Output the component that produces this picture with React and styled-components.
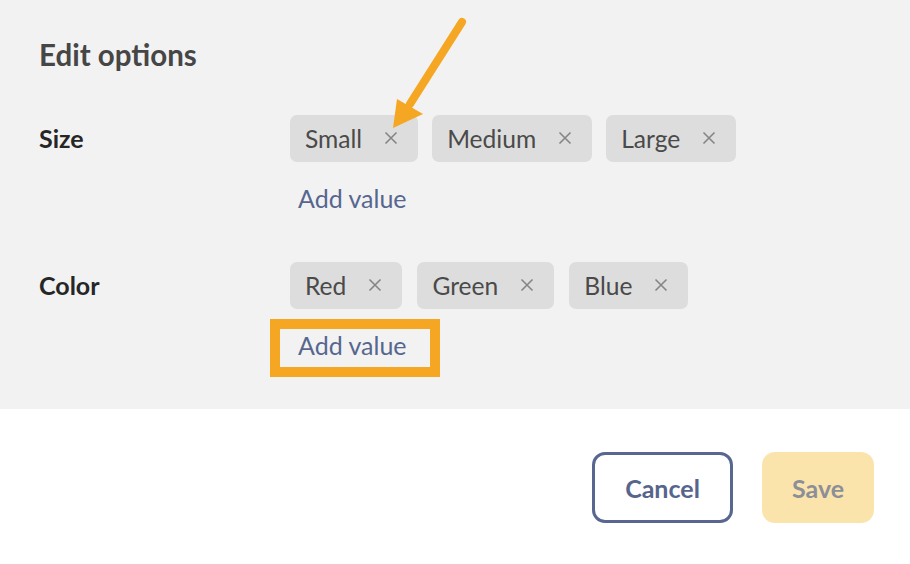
import React from "react";
import styled, { createGlobalStyle } from "styled-components";

const GlobalStyle = createGlobalStyle`
  html, body {
    margin: 0;
    padding: 0;
    background: #ffffff;
    font-family: Lato, "Open Sans", "Liberation Sans", sans-serif;
  }
`;

const Page = styled.div`
  width: 910px;
  height: 564px;
  display: flex;
  flex-direction: column;
  background: #ffffff;
`;

const Panel = styled.section`
  position: relative;
  height: 409px;
  box-sizing: border-box;
  padding: 37px 39px 0;
  background: #f2f2f2;
`;

const Title = styled.h2`
  margin: 0 0 42px;
  font-size: 29.5px;
  line-height: 36px;
  font-weight: 700;
  color: #464646;
`;

const OptionRow = styled.div`
  display: grid;
  grid-template-columns: 251px 1fr;
  margin-bottom: 42px;
`;

const Label = styled.div`
  font-size: 25px;
  line-height: 46px;
  font-weight: 700;
  color: #262626;
`;

const Values = styled.div`
  display: flex;
  flex-direction: column;
  align-items: flex-start;
`;

const ChipList = styled.div`
  display: flex;
  gap: ${(p) => p.$gap}px;
`;

const Chip = styled.span`
  display: inline-flex;
  align-items: center;
  gap: 22px;
  height: 47px;
  box-sizing: border-box;
  padding: 0 20px 0 15px;
  border-radius: 7px;
  background: #dddddd;
  color: #4a4a4a;
  font-size: 24.6px;
`;

const Remove = styled.svg`
  width: 14px;
  height: 14px;
  margin-top: -2px;
  stroke: #858585;
  stroke-width: 1.6;
`;

const AddButton = styled.button`
  width: 150px;
  height: 38px;
  margin: 20px 0 0 -10px;
  padding: 0 0 5px 18px;
  text-align: left;
  border: none;
  background: transparent;
  color: #56668f;
  font-family: inherit;
  font-size: 25px;
  line-height: 33px;
  outline: ${(p) => (p.$highlight ? "10px solid #f5a623" : "none")};
  cursor: pointer;
`;

const Arrow = styled.svg`
  position: absolute;
  left: 0;
  top: 0;
  pointer-events: none;
`;

const Footer = styled.footer`
  display: flex;
  justify-content: flex-end;
  gap: 29px;
  padding: 43px 36px 0 0;
`;

const Button = styled.button`
  height: 71px;
  box-sizing: border-box;
  border-radius: 13px;
  font-family: inherit;
  font-size: 25px;
  font-weight: 700;
  cursor: pointer;
`;

const CancelButton = styled(Button)`
  width: 141px;
  border: 3px solid #576790;
  background: #ffffff;
  color: #56658c;
`;

const SaveButton = styled(Button)`
  width: 112px;
  border: none;
  background: #fbe4ac;
  color: #8c8f98;
`;

const options = [
  { name: "Size", values: ["Small", "Medium", "Large"], gap: 14 },
  { name: "Color", values: ["Red", "Green", "Blue"], gap: 15, highlight: true },
];

function CloseIcon() {
  return (
    <Remove viewBox="0 0 14 14">
      <path d="M1.5 1.5 L12.5 12.5 M12.5 1.5 L1.5 12.5" fill="none" />
    </Remove>
  );
}

export default function App() {
  return (
    <Page>
      <GlobalStyle />
      <Panel>
        <Title>Edit options</Title>
        {options.map((opt) => (
          <OptionRow key={opt.name}>
            <Label>{opt.name}</Label>
            <Values>
              <ChipList $gap={opt.gap}>
                {opt.values.map((v) => (
                  <Chip key={v}>
                    {v}
                    <CloseIcon />
                  </Chip>
                ))}
              </ChipList>
              <AddButton $highlight={opt.highlight}>Add value</AddButton>
            </Values>
          </OptionRow>
        ))}
        <Arrow width="910" height="409" viewBox="0 0 910 409">
          <line
            x1="462"
            y1="22"
            x2="410"
            y2="104"
            stroke="#f5a623"
            strokeWidth="8"
            strokeLinecap="round"
          />
          <polygon points="393,128 397,99 423,114" fill="#f5a623" />
        </Arrow>
      </Panel>
      <Footer>
        <CancelButton>Cancel</CancelButton>
        <SaveButton>Save</SaveButton>
      </Footer>
    </Page>
  );
}
